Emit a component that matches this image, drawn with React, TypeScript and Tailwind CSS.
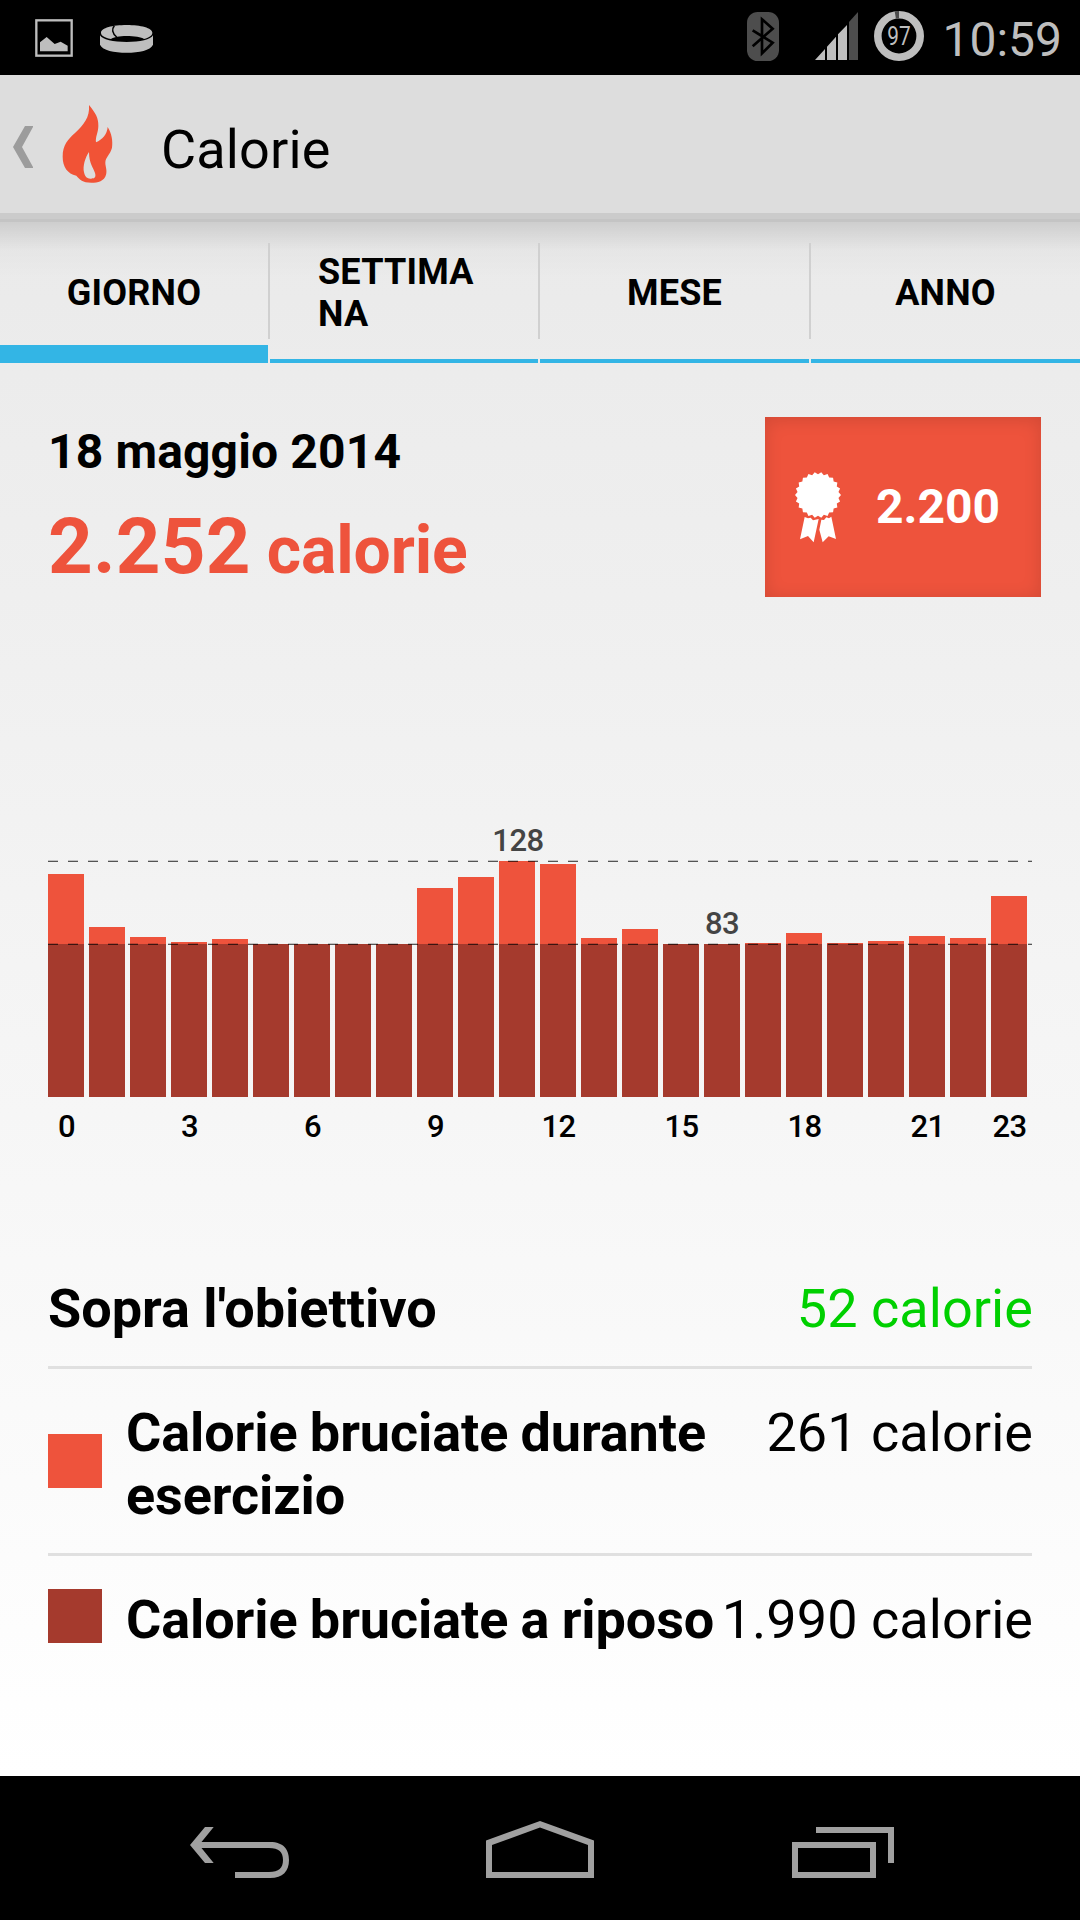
import { clsx } from 'clsx'

const BASE = 153

// Height in px of the active part above the resting calories, per hour
const hours = [
  70, 17, 7, 2, 5, 0, 0, 0, 0, 56, 67, 83,
  80, 6, 15, 0, 0, 1, 11, 1, 3, 8, 6, 48,
]

const axisLabels = [0, 3, 6, 9, 12, 15, 18, 21, 23]

const tabs = [
  { title: 'GIORNO', active: true },
  { title: 'SETTIMANA', active: false },
  { title: 'MESE', active: false },
  { title: 'ANNO', active: false },
]

const rows = [
  { label: "Sopra l'obiettivo", value: '52 calorie', swatch: '', valueClass: 'text-[#00d000]' },
  { label: 'Calorie bruciate durante esercizio', value: '261 calorie', swatch: 'bg-[#ee533c]', valueClass: 'text-black' },
  { label: 'Calorie bruciate a riposo', value: '1.990 calorie', swatch: 'bg-[#a53a2d]', valueClass: 'text-black' },
]

function StatusBar() {
  return (
    <div className="flex h-[75px] items-start bg-black text-[#bebebe]">
      <svg className="mt-[19px] ml-[35px] h-[38px] w-[38px]" viewBox="105 57 114 114" fill="currentColor">
        <rect x="109" y="61" width="106" height="106" fill="none" stroke="currentColor" strokeWidth="7" />
        <path d="M120 127 L140 111 L164 132 L182 125 L203 137 V154 H120 Z" />
      </svg>
      <svg className="mt-[25px] ml-[27px] h-[28px] w-[53px]" viewBox="300 75 159 84" fill="currentColor">
        <path d="M300 106 V134 C308 151 342 158 380 158 C418 158 451 151 459 134 V106 C453 119 420 126 380 126 C340 126 306 119 300 106 Z" />
        <path d="M303 98 C303 84 338 75 380 75 C422 75 457 84 457 98 C457 106 449 112 432 117 C425 111 402 108 380 108 C357 108 342 111 333 117 C311 112 303 106 303 98 Z" />
        <path d="M343 77 C335 87 336 100 350 111" fill="none" stroke="black" strokeWidth="4.5" />
      </svg>

      <svg className="mt-[12px] ml-auto h-[49px] w-[32px]" viewBox="81 36 96 147">
        <rect x="81" y="36" width="96" height="147" rx="32" fill="#4d4d4d" />
        <path d="M98 91 L158 128 L126 160 V58 L158 86 L98 139" fill="none" stroke="black" strokeWidth="8" />
      </svg>
      <svg className="mt-[12px] ml-[36px] h-[48px] w-[43px]" viewBox="285 36 129 144" fill="currentColor">
        <path d="M285 180 L315 147 V180 Z M321 140 L348 110 V180 H321 Z M354 103 L381 75 V180 H354 Z" />
        <path d="M387 66 L414 36 V180 H387 Z" fill="#4d4d4d" />
      </svg>
      <div className="relative mt-[11px] ml-4 size-[50px]">
        <svg className="size-[50px]" viewBox="0 0 50 50" fill="none" strokeWidth="7.6">
          <circle cx="25" cy="25" r="21.2" stroke="#bebebe" />
          <path d="M21.3 4.1 A21.2 21.2 0 0 1 25 3.8" stroke="#4d4d4d" />
        </svg>
        <span className="absolute inset-0 flex scale-x-[0.8] items-center justify-center text-[26px] leading-none">97</span>
      </div>
      <span className="mt-[12px] mr-[18px] ml-[18px] text-[48px] leading-[56px]">10:59</span>
    </div>
  )
}

function ActionBar() {
  return (
    <header className="flex h-[147px] items-start border-b-[3px] border-[#c4c4c4] bg-[#ddd]">
      <div className="flex h-36 w-full items-start border-b-[6px] border-[#cbcbcb]">
        <svg className="mt-[51px] ml-[13px] h-[42px] w-[20px]" viewBox="0 0 20 42" fill="#9c9c9c">
          <path d="M12 0 H20.5 L9 21 L20.5 42 H12 L0 21 Z" />
        </svg>
        <svg className="mt-[30px] ml-[29px] h-[78px] w-[51px]" viewBox="187 315 153 234">
          <path
            fill="#f15336"
            fillRule="evenodd"
            d="M268 315 C287 338 297 354 296 378 C296 397 287 410 289 427 C308 418 322 405 324 381 C336 400 340 423 337 443 C332 463 317 472 317 488 C317 499 323 511 319 524 C314 543 295 548 275 548 C248 548 241 539 230 527 C204 521 189 501 189 470 C189 435 205 418 226 399 C252 374 271 353 268 315 Z M268 456 C256 474 249 498 253 517 C256 532 264 537 274 536 C284 536 290 532 286 519 C281 503 268 490 268 456 Z"
          />
        </svg>
        <h1 className="mt-[43px] ml-[48px] text-[54px] leading-[63px] tracking-[0.15px]">Calorie</h1>
      </div>
    </header>
  )
}

function Tabs() {
  return (
    <nav className="grid h-[141px] grid-cols-[268px_268px_269px_269px] gap-[2px] bg-linear-to-b from-black/12 via-black/2 via-20% to-transparent to-40% text-[36px] leading-[42px] font-bold tracking-[0.2px]">
      {tabs.map((tab, i) => (
        <div
          key={tab.title}
          className={clsx(
            'relative flex items-center justify-center border-[#33b5e5]',
            tab.active ? 'border-b-[18px]' : 'border-b-4',
          )}
        >
          <span className={clsx('w-[172px] break-all', tab.title.length > 8 ? 'text-left' : 'text-center', tab.active ? 'mt-[19px]' : 'mt-[5px]')}>
            {tab.title}
          </span>
          {i > 0 && <div className="absolute top-[21px] -left-[2px] h-24 w-[2px] bg-[#d0d0d0]" />}
        </div>
      ))}
    </nav>
  )
}

function Ribbon() {
  const points = Array.from({ length: 44 }, (_, i) => {
    const r = i % 2 ? 69 : 62
    const a = (i / 44) * Math.PI * 2 - Math.PI / 2
    return `${(233 + r * Math.cos(a)).toFixed(1)},${(286 + r * Math.sin(a)).toFixed(1)}`
  }).join(' ')

  return (
    <svg className="h-[71px] w-[46px]" viewBox="164 217 138 213" fill="white">
      <polygon points={points} />
      <path d="M193 352 L203 356 L211 354 L218 362 L235 358 L220 428 L203 409 L179 419 Z" />
      <path d="M243 360 L251 361 L258 353 L266 356 L273 351 L287 418 L265 410 L247 428 L237 390 Z" />
    </svg>
  )
}

function Summary() {
  return (
    <section className="flex h-[180px] items-start justify-between pr-[39px] pl-12">
      <div className="mt-[7px]">
        <div className="text-[48px] leading-[56px] font-bold tracking-[0.15px]">18 maggio 2014</div>
        <div className="mt-[21px] flex items-baseline text-[#ee533c]">
          <span className="text-[78px] leading-[92px] font-bold tracking-[0.2px]">2.252</span>
          <span className="ml-4 text-[66px] leading-[78px] font-bold tracking-[-0.1px]">calorie</span>
        </div>
      </div>
      <div className="flex h-[180px] w-[276px] items-center bg-[#ee533c] pl-[30px] shadow-[inset_0_2px_18px_rgba(0,0,0,0.13)]">
        <Ribbon />
        <span className="ml-[35px] text-[48px] leading-[56px] font-bold text-white">2.200</span>
      </div>
    </section>
  )
}

function DashedLine({ className }: { className: string }) {
  return (
    <div className={clsx('absolute left-0 w-[984px]', className)}>
      <div className="h-px bg-[repeating-linear-gradient(90deg,rgba(0,0,0,0.2)_0_10px,transparent_10px_20px)]" />
      <div className="h-px bg-[repeating-linear-gradient(90deg,rgba(0,0,0,0.65)_0_10px,transparent_10px_20px)]" />
    </div>
  )
}

function Chart() {
  return (
    <section className="mx-12 text-[31px] leading-9 font-medium tracking-[-0.5px]">
      <div className="relative flex h-[236px] items-end gap-[5px]">
        {hours.map((active, hour) => (
          <div key={hour} className="w-9">
            <div className="bg-[#ee533c]" style={{ height: active }} />
            <div className="bg-[#a53a2d]" style={{ height: BASE }} />
          </div>
        ))}
        <DashedLine className="-top-px" />
        <DashedLine className="top-[82px]" />
        <span className="absolute -top-[38px] left-[430px] w-20 text-center text-[#444]">128</span>
        <span className="absolute top-[45px] left-[634px] w-20 text-center text-[#444]">83</span>
      </div>
      <div className="mt-3 flex gap-[5px]">
        {hours.map((_, hour) => (
          <div key={hour} className="flex h-9 w-9 justify-center pl-px">
            {axisLabels.includes(hour) && <span>{hour}</span>}
          </div>
        ))}
      </div>
    </section>
  )
}

function Breakdown() {
  return (
    <section className="mx-12 text-[54px] leading-[63px]">
      {rows.map((row, i) => (
        <div
          key={row.label}
          className={clsx('flex items-start pt-8 pb-[26px]', i < rows.length - 1 && 'border-b-[3px] border-[#e0e0e0]')}
        >
          {row.swatch && <div className={clsx('mr-6 mb-[7px] size-[54px] shrink-0 self-center', row.swatch)} />}
          <div className={clsx('w-0 flex-1 font-bold', row.swatch && 'tracking-[-0.1px] [word-spacing:-1px]')}>{row.label}</div>
          <div className={clsx('-mr-px whitespace-nowrap tracking-[0.05px]', row.valueClass)}>{row.value}</div>
        </div>
      ))}
    </section>
  )
}

function NavBar() {
  return (
    <footer className="flex h-36 items-start bg-black">
      <svg className="mt-[51px] ml-[190px] h-[51px] w-[99px]" viewBox="190 1827 99 51" fill="#a0a0a0">
        <path d="M205 1827 H213.7 L201.5 1842 H270 C284 1842 289 1850 289 1860 C289 1871 283 1878 270 1878 H235 V1872 H269 C279 1872 283 1868 283 1860 C283 1852 279 1848 269 1848 H201.5 L213.7 1863 H205 L190 1845 Z" />
      </svg>
      <svg className="mt-[45px] ml-[197px] h-[57px] w-[108px]" viewBox="486 1821 108 57" fill="#a0a0a0" fillRule="evenodd">
        <path d="M540 1821 L594 1840.5 V1878 H486 V1840.5 Z M540 1827.5 L492 1845 V1872 H588 V1845 Z" />
      </svg>
      <svg className="mt-[51px] ml-[198px] h-[51px] w-[102px]" viewBox="792 1827 102 51" fill="#a0a0a0" fillRule="evenodd">
        <path d="M816 1827 H894 V1863 H888 V1833 H816 Z" />
        <path d="M792 1842 H876 V1878 H792 Z M798 1848 V1872 H870 V1848 Z" />
      </svg>
    </footer>
  )
}

export default function App() {
  return (
    <div className="flex h-[1920px] w-[1080px] flex-col overflow-hidden font-[Roboto,sans-serif] text-black">
      <StatusBar />
      <ActionBar />
      <main className="flex-1 bg-linear-to-b from-[#eaeaea] to-white">
        <Tabs />
        <div className="mt-[54px]">
          <Summary />
        </div>
        <div className="mt-[264px]">
          <Chart />
        </div>
        <div className="mt-[100px]">
          <Breakdown />
        </div>
      </main>
      <NavBar />
    </div>
  )
}
